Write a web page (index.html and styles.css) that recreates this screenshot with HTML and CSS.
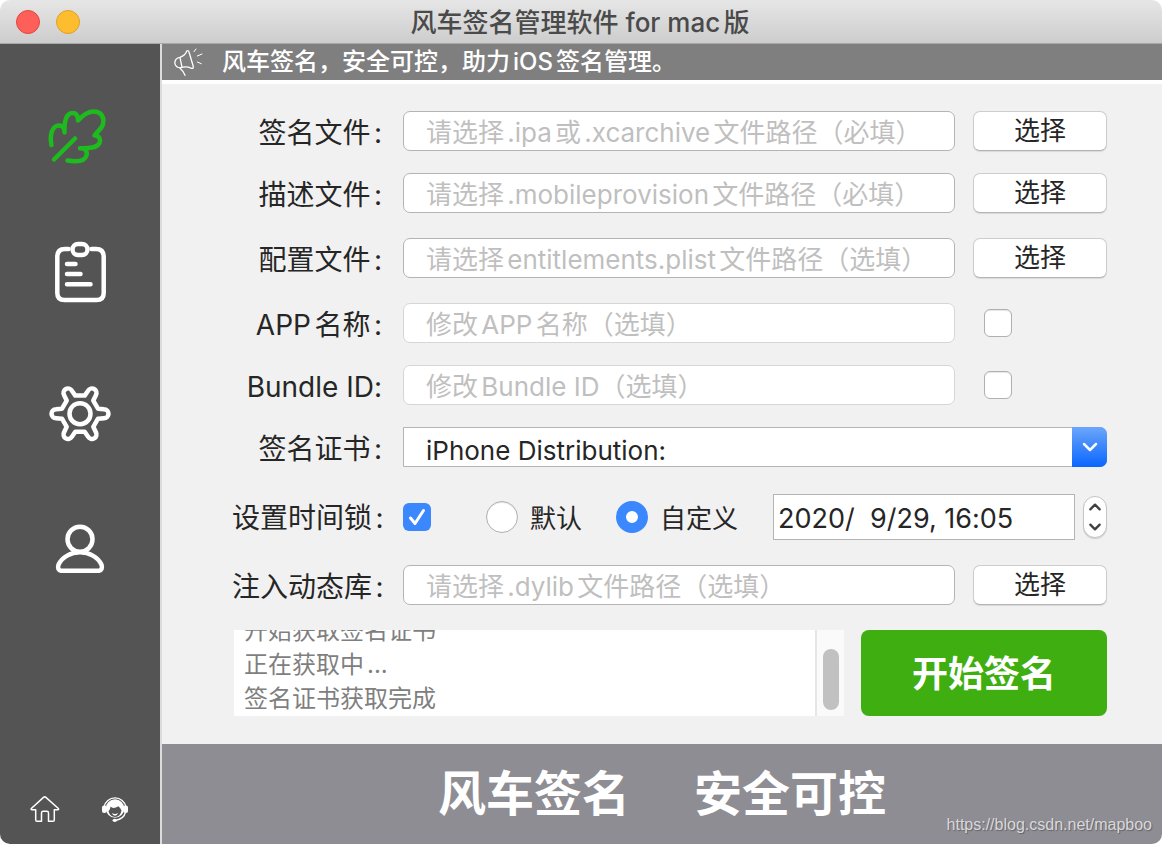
FILE: index.html
```html
<!DOCTYPE html>
<html lang="zh-CN">
<head>
    <meta charset="UTF-8">
    <meta name="viewport" content="width=device-width, initial-scale=1.0">
    <title>风车签名管理软件 for mac版</title>
    <link rel="stylesheet" href="styles.css">
</head>
<body>
    <div class="window">
        <header class="titlebar">
            <button type="button" class="dot dot-close" aria-label="关闭"></button>
            <button type="button" class="dot dot-min" aria-label="最小化"></button>
            <h1>风车签名管理软件 for mac版</h1>
        </header>

        <div class="main">
            <aside class="sidebar">
                <nav class="menu">
                    <button type="button" class="menu-btn active" aria-label="签名">
                        <svg viewBox="1 0 64 64">
                            <path d="M4.500 40C2.500 30 5 20.500 12 20.500C15.500 20.500 17.500 23 17.500 27.500C17 16 19.500 8 25.500 8C29.500 8 31 11 31 15.500C35 11 41 6.500 47 6.500C54 6.500 57.500 12 56 19C55 24 50.500 26 47.500 30.500C52 30.500 54 34 52.500 38C50 43 42 43.500 33 43.300C38.500 43 40.500 46 39.500 50.500C38 56 30 57 20.500 55.500"/>
                            <path d="M28 33.500L7 54.500"/>
                        </svg>
                    </button>
                    <button type="button" class="menu-btn" aria-label="记录">
                        <svg viewBox="0 0 64 64">
                            <path d="M20.500 6H17Q9.300 6 9.300 13.700V50Q9.300 57 16.500 57H48.500Q55.700 57 55.700 50V13.700Q55.700 6 48 6H43.500"/>
                            <rect x="24.500" y="1" width="15" height="11" rx="5.500"/>
                            <path d="M19 21H27.500M19 31H32.500M19 41.300H42.500"/>
                        </svg>
                    </button>
                    <button type="button" class="menu-btn" aria-label="设置">
                        <svg viewBox="0 0 64 64">
                            <g transform="translate(32 32.700)">
                                <circle r="10.500"/>
                                <path d="M18 -5L24 -4.500A4.500 4.500 0 0 1 24 4.500L18 5L13.300 13.100L15.900 18.500A4.500 4.500 0 0 1 8.100 23L4.700 18.100H-4.700L-8.100 23A4.500 4.500 0 0 1 -15.900 18.500L-13.300 13.100L-18 5L-24 4.500A4.500 4.500 0 0 1 -24 -4.500L-18 -5L-13.300 -13.100L-15.900 -18.500A4.500 4.500 0 0 1 -8.100 -23L-4.700 -18.100H4.700L8.100 -23A4.500 4.500 0 0 1 15.900 -18.500L13.300 -13.100Z"/>
                            </g>
                        </svg>
                    </button>
                    <button type="button" class="menu-btn" aria-label="用户">
                        <svg viewBox="0 0 64 64">
                            <circle cx="32" cy="20.300" r="12.500"/>
                            <path d="M13 51.700H51Q55 51 53.500 45.700C50 38 41 33.300 32 33.300S14 38 10.500 45.700Q9 51 13 51.700Z"/>
                        </svg>
                    </button>
                </nav>
                <div class="links">
                    <a href="#" aria-label="主页">
                        <svg viewBox="0 0 30 30" fill="none" stroke="#fff" stroke-width="1.500" stroke-linejoin="round">
                            <path d="M1.300 14.500L13.500 3.400Q14.700 2.400 15.900 3.400L28.400 14.500Q29 15.700 27.800 15.700H24.300V26Q24.300 27.300 23 27.300H18.500V19Q18.500 17.300 16.800 17.300H13.200Q11.500 17.300 11.500 19V27.300H7Q5.700 27.300 5.700 26V15.700H2Q.7 15.700 1.300 14.500Z"/>
                        </svg>
                    </a>
                    <a href="#" aria-label="客服">
                        <svg viewBox="0 0 30 30">
                            <path d="M4 13A11.200 11.200 0 0 1 26 13" fill="none" stroke="#fff" stroke-width="1.400"/>
                            <circle cx="15" cy="14.500" r="9.300" fill="#fff"/>
                            <path d="M8.500 17.500Q10.500 14.500 10.600 12.500Q13 15.500 18.500 12.200Q20.500 14 21.500 16.500Q20.500 22.500 15 23Q10 22.500 8.500 17.500Z" fill="#545454"/>
                            <path d="M11.800 19Q15 20.800 18.200 19Q17 21.800 15 21.800T11.800 19Z" fill="#fff"/>
                            <rect x="2" y="11.500" width="4.500" height="7.500" rx="2" fill="#fff"/>
                            <rect x="23.500" y="11.500" width="4.500" height="7.500" rx="2" fill="#fff"/>
                            <path d="M25.500 18Q24 25 15.500 26.300" fill="none" stroke="#fff" stroke-width="1.300"/>
                            <ellipse cx="14.800" cy="26.300" rx="2.200" ry="1.600" fill="#fff"/>
                        </svg>
                    </a>
                </div>
            </aside>

            <section class="content">
                <div class="notice">
                    <svg viewBox="0 0 32 32" fill="none" stroke="#fff" stroke-width="1.300" stroke-linecap="round" stroke-linejoin="round">
                        <path d="M8 11.300Q13.500 9.500 14.700 5Q16.500 4 17 6L21.300 20.500Q21.500 23 19.500 22.300Q14 19.800 9 21.700Q3.500 22 2.800 17Q3 12 8 11.300L10 21.300M8 22.200Q11 24.500 13 29.300"/>
                        <path d="M22 5.700L24 3M25.300 10L30 8M25.300 16L29.300 17.700" stroke-width="1"/>
                    </svg>
                    <p>风车签名，安全可控，助力iOS签名管理。</p>
                </div>

                <form class="form">
                    <div class="group">
                        <div class="row">
                            <label for="ipa">签名文件:</label>
                            <input type="text" id="ipa" class="field" placeholder="请选择.ipa或.xcarchive文件路径（必填）">
                            <button type="button" class="pick-btn">选择</button>
                        </div>
                        <div class="row">
                            <label for="profile">描述文件:</label>
                            <input type="text" id="profile" class="field" placeholder="请选择.mobileprovision文件路径（必填）">
                            <button type="button" class="pick-btn">选择</button>
                        </div>
                    </div>

                    <div class="row">
                        <label for="plist">配置文件:</label>
                        <input type="text" id="plist" class="field" placeholder="请选择entitlements.plist文件路径（选填）">
                        <button type="button" class="pick-btn">选择</button>
                    </div>

                    <div class="group">
                        <div class="row">
                            <label for="app-name">APP名称:</label>
                            <input type="text" id="app-name" class="field" placeholder="修改APP名称（选填）" disabled>
                            <input type="checkbox" class="check check-side" aria-label="修改APP名称">
                        </div>
                        <div class="row">
                            <label for="bundle-id">Bundle ID:</label>
                            <input type="text" id="bundle-id" class="field" placeholder="修改Bundle ID（选填）" disabled>
                            <input type="checkbox" class="check check-side" aria-label="修改Bundle ID">
                        </div>
                        <div class="row">
                            <label for="cert">签名证书:</label>
                            <div class="combo">
                                <select id="cert">
                                    <option>iPhone Distribution:</option>
                                </select>
                                <span class="combo-arrow">
                                    <svg viewBox="0 0 16 10"><path d="M2 2L8 8L14 2"/></svg>
                                </span>
                            </div>
                        </div>
                    </div>

                    <div class="row">
                        <label for="lock">设置时间锁:</label>
                        <div class="time">
                            <input type="checkbox" id="lock" class="check" checked>
                            <div class="radios">
                                <label class="radio"><input type="radio" name="mode"><span>默认</span></label>
                                <label class="radio"><input type="radio" name="mode" checked><span>自定义</span></label>
                            </div>
                            <input type="text" class="date" value="2020/  9/29, 16:05" aria-label="到期时间">
                            <div class="stepper">
                                <button type="button" aria-label="增加"><svg viewBox="0 0 12 8"><path d="M2 6L6 2L10 6"/></svg></button>
                                <button type="button" aria-label="减少"><svg viewBox="0 0 12 8"><path d="M2 2L6 6L10 2"/></svg></button>
                            </div>
                        </div>
                    </div>

                    <div class="row">
                        <label for="dylib">注入动态库:</label>
                        <input type="text" id="dylib" class="field" placeholder="请选择.dylib文件路径（选填）">
                        <button type="button" class="pick-btn">选择</button>
                    </div>

                    <div class="actions">
                        <div class="log">
                            <div class="log-lines">
                                <p>开始获取签名证书</p>
                                <p>正在获取中...</p>
                                <p>签名证书获取完成</p>
                            </div>
                            <div class="log-bar"><div class="log-thumb"></div></div>
                        </div>
                        <button type="submit" class="start-btn">开始签名</button>
                    </div>
                </form>

                <footer class="banner">
                    <span>风车签名</span>
                    <span>安全可控</span>
                    <a class="watermark" href="https://blog.csdn.net/mapboo">https://blog.csdn.net/mapboo</a>
                </footer>
            </section>
        </div>
    </div>
</body>
</html>
```
FILE: styles.css
```css
* {
    box-sizing: border-box;
}

body {
    margin: 0;
    background: #fff;
    color: #262626;
    font-family: Inter, "Noto Sans CJK SC", sans-serif;
    font-size: 26px;
    font-variant-ligatures: no-contextual;
    text-autospace: normal;
}

button, input, select {
    font: inherit;
    font-variant-ligatures: no-contextual;
    color: inherit;
}

button {
    padding: 0;
    border: none;
    cursor: pointer;
}

p {
    margin: 0;
}

svg {
    display: block;
}

.window {
    min-height: 100vh;
    display: flex;
    flex-direction: column;
    border-radius: 10px;
    overflow: hidden;
}

/* title bar */
.titlebar {
    height: 44px;
    display: flex;
    align-items: center;
    gap: 16px;
    padding: 0 16px;
    background: linear-gradient(#e6e6e6, #cdcdcd);
    border-bottom: 1px solid #a8a8a8;
}

.titlebar h1 {
    flex: 1;
    margin: 0;
    padding: 2px 82px 0 0;
    text-align: center;
    font-size: 26px;
    font-weight: 500;
    line-height: 40px;
    color: #4a4a4a;
}

.dot {
    width: 24px;
    height: 24px;
    border-radius: 50%;
}

.dot-close {
    background: #fe5f58;
    border: 1px solid #e2463f;
}

.dot-min {
    background: #febd2f;
    border: 1px solid #e0a023;
}

.main {
    flex: 1;
    display: flex;
}

/* sidebar */
.sidebar {
    width: 162px;
    display: flex;
    flex-direction: column;
    justify-content: space-between;
    align-items: center;
    padding: 61px 0 20px;
    background: #545454;
    border-right: 2px solid #dcdcdc;
}

.menu {
    display: flex;
    flex-direction: column;
    gap: 74px;
}

.menu-btn {
    width: 64px;
    height: 64px;
    background: none;
    color: #fff;
}

.menu-btn.active {
    color: #1dbb1d;
}

.menu-btn svg {
    overflow: visible;
    fill: none;
    stroke: currentColor;
    stroke-width: 4.5;
    stroke-linecap: round;
    stroke-linejoin: round;
}

.links {
    display: flex;
    gap: 40px;
}

.links svg {
    width: 30px;
    height: 30px;
}

/* content */
.content {
    flex: 1;
    display: flex;
    flex-direction: column;
    background: #f1f1f1;
}

.notice {
    display: flex;
    align-items: center;
    gap: 18px;
    height: 40px;
    padding-left: 10px;
    background: #7f7f7f;
    border-bottom: 4px solid #fff;
    color: #fff;
    font-size: 24px;
    font-weight: 500;
    line-height: 36px;
}

.notice svg {
    width: 32px;
    height: 32px;
}

.form {
    flex: 1;
    display: flex;
    flex-direction: column;
    gap: 25px;
    padding: 27px 55px 28px 70px;
}

.group {
    display: flex;
    flex-direction: column;
    gap: 22px;
}

.row {
    display: grid;
    grid-template-columns: 153px 1fr 134px;
    column-gap: 18px;
    align-items: center;
}

.row > label {
    height: 40px;
    padding: 2px 3px 0 0;
    text-align: right;
    font-size: 28px;
    line-height: 40px;
    white-space: nowrap;
}

.field {
    width: 100%;
    height: 40px;
    padding: 3px 23px 0 22px;
    border: 1px solid #b4b4b4;
    border-radius: 7px;
    background: #fff;
}

.field:disabled {
    border-color: #d6d6d6;
}

.field::placeholder {
    color: #bfbfbf;
}

.pick-btn {
    height: 40px;
    border: 1px solid #cdcdcd;
    border-bottom-color: #b4b4b4;
    border-radius: 7px;
    background: #fff;
    box-shadow: 0 1px 1px rgba(0, 0, 0, 0.1);
    line-height: 38px;
}

.check {
    appearance: none;
    width: 28px;
    height: 28px;
    margin: 0;
    border: 1px solid #b0b0b0;
    border-radius: 6px;
    background: #fff;
    box-shadow: inset 0 1px 1px rgba(0, 0, 0, 0.1);
}

.check:checked {
    border: none;
    background: #3b87fd url("data:image/svg+xml,%3Csvg xmlns='http://www.w3.org/2000/svg' viewBox='0 0 28 28'%3E%3Cpath d='M7.500 15L12 20.500L20.500 7.500' fill='none' stroke='white' stroke-width='3' stroke-linecap='round' stroke-linejoin='round'/%3E%3C/svg%3E") center / 28px;
    box-shadow: none;
}

.check-side {
    margin-left: 11px;
}

.combo {
    grid-column: 2 / 4;
    position: relative;
}

.combo select {
    appearance: none;
    display: block;
    width: 100%;
    height: 40px;
    padding: 6px 60px 0 22px;
    border: 1px solid #b4b4b4;
    border-radius: 0 7px 7px 0;
    background: #fff;
}

.combo-arrow {
    position: absolute;
    top: 0;
    right: 0;
    width: 35px;
    height: 40px;
    display: flex;
    align-items: center;
    justify-content: center;
    border-radius: 0 7px 7px 0;
    background: linear-gradient(#6ba6fb, #0a66ff);
    pointer-events: none;
}

.combo-arrow svg {
    width: 16px;
    height: 10px;
}

.combo-arrow path, .stepper path {
    fill: none;
    stroke: #fff;
    stroke-width: 2.5;
    stroke-linecap: round;
    stroke-linejoin: round;
}

/* time lock */
.time {
    grid-column: 2 / 4;
    display: flex;
    align-items: center;
    height: 48px;
    padding-top: 2px;
}

.radios {
    display: flex;
    gap: 34px;
    padding: 0 35px 0 55px;
}

.radio {
    display: flex;
    align-items: center;
    gap: 12px;
    line-height: 40px;
}

.radio span {
    padding-top: 3px;
}

.radio input {
    appearance: none;
    width: 32px;
    height: 32px;
    margin: 0;
    border: 1px solid #b0b0b0;
    border-radius: 50%;
    background: #fff;
    box-shadow: inset 0 1px 1px rgba(0, 0, 0, 0.1);
}

.radio input:checked {
    border: 10px solid #3b87fd;
    box-shadow: none;
}

.date {
    flex: 1;
    min-width: 0;
    height: 46px;
    margin-right: 8px;
    padding: 2px 4px 0;
    border: 1px solid #b4b4b4;
    background: #fff;
    font-size: 27px;
}

.stepper {
    width: 24px;
    height: 42px;
    display: flex;
    flex-direction: column;
    border: 1px solid #c4c4c4;
    border-radius: 12px;
    background: #fff;
    box-shadow: 0 1px 1px rgba(0, 0, 0, 0.15);
}

.stepper button {
    flex: 1;
    display: flex;
    align-items: center;
    justify-content: center;
    background: none;
}

.stepper svg {
    width: 14px;
    height: 10px;
}

.stepper path {
    stroke: #404040;
    stroke-width: 2;
}

/* log and start button */
.actions {
    display: flex;
    gap: 17px;
    height: 86px;
    padding-left: 2px;
}

.log {
    flex: 1;
    display: flex;
    background: #fff;
}

.log-lines {
    flex: 1;
    display: flex;
    flex-direction: column;
    justify-content: flex-end;
    padding-left: 10px;
    overflow: hidden;
    color: #7f7f7f;
    font-size: 24px;
    line-height: 34px;
}

.log-bar {
    width: 29px;
    padding: 19px 5px 6px 6px;
    background: #fafafa;
    border-left: 2px solid #e6e6e6;
}

.log-thumb {
    height: 100%;
    border-radius: 8px;
    background: #c1c1c1;
}

.start-btn {
    width: 246px;
    padding-bottom: 4px;
    border-radius: 8px;
    background: #3eae10;
    color: #fff;
    font-size: 36px;
    font-weight: 700;
}

.banner {
    position: relative;
    height: 100px;
    display: flex;
    justify-content: center;
    align-items: center;
    gap: 64px;
    padding-bottom: 8px;
    background: #8e8d93;
    color: #fff;
    font-size: 48px;
    font-weight: 700;
}

.watermark {
    position: absolute;
    right: 10px;
    bottom: 8px;
    color: #d8d8dc;
    font-family: "Liberation Sans", sans-serif;
    font-size: 16px;
    font-weight: 400;
    line-height: 22px;
    text-decoration: none;
    text-shadow: 1px 1px 1px rgba(0, 0, 0, 0.3);
}
```
